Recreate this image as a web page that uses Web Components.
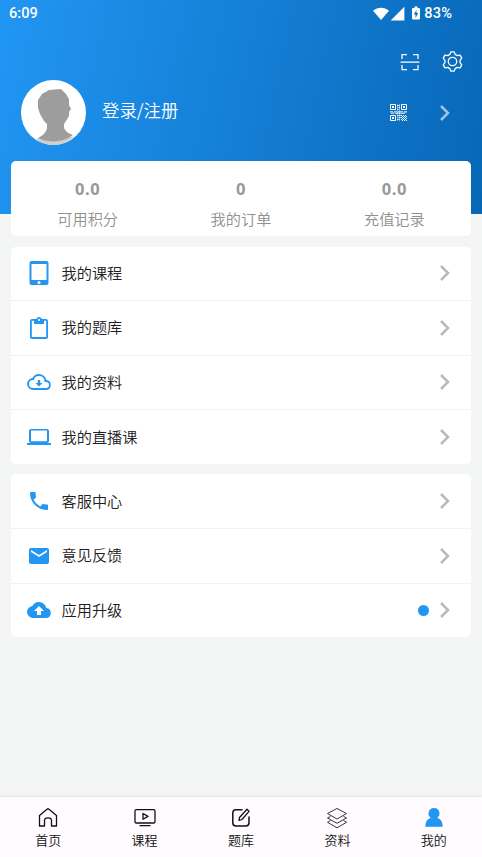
<!DOCTYPE html>
<html lang="zh-CN"><head><meta charset="utf-8"><title>我的</title>
<style>html,body{margin:0;height:100%}body{background:#f4f6f5;font-family:"Noto Sans CJK SC",sans-serif;overflow:hidden}</style></head>
<body><profile-page></profile-page>
<script>
const icons={
 wifi:['0 0 24 24','<path fill="currentColor" d="M0 7C7 1 17 1 24 7L12 21Z"/>'],
 signal:['0 0 24 24','<path fill="currentColor" d="M1 23H23V1Z"/>'],
 battery:['0 0 16 26','<path fill="currentColor" fill-rule="evenodd" d="M5 0H11V3H14Q16 3 16 5V24Q16 26 14 26H2Q0 26 0 24V5Q0 3 2 3H5ZM9 7L3.5 16H7V23L12.5 13H9Z"/>'],
 scan:['0 0 20 18','<path fill="none" stroke="currentColor" stroke-width="1.25" d="M2 6V1.5H7M13 1.5H18V6M2 12V16.5H7M13 16.5H18V12M.5 9H19.5"/>'],
 gear:['0 0 20 20','<g fill="none" stroke="currentColor" stroke-width="1.25" stroke-linejoin="round"><path d="M8.5.8H11.5L12.5 3.2L14.5 4.4L17.2 4L18.8 6.8L17.2 8.9V11.1L18.8 13.2L17.2 16L14.5 15.6L12.5 16.8L11.5 19.2H8.5L7.5 16.8L5.5 15.6L2.8 16L1.2 13.2L2.8 11.1V8.9L1.2 6.8L2.8 4L5.5 4.4L7.5 3.2Z"/><circle cx="10" cy="10" r="4"/></g>'],
 qr:['0 0 17 17','<g fill="none" stroke="currentColor"><path d="M.5.5H5.5V5.5H.5ZM11.5.5H16.5V5.5H11.5ZM.5 11.5H5.5V16.5H.5Z"/><path opacity=".65" d="M7 1.5H10M8 3.5H10M7 5.5H9M0 7.5H3M4 7.5H7M8 7.5H13M14 7.5H17M1 9.5H4M5 9.5H15M7 11.5H12M8 13.5H11M7 15.5H10"/><path opacity=".45" d="M7.5 0V17M9.5 0V17M0 8.5H17"/><path stroke-dasharray="1 1" d="M11 11.5H17M12 12.5H17M11 13.5H17M12 14.5H17M11 15.5H17M12 16.5H17"/></g><path fill="currentColor" d="M2 2H4V4H2ZM13 2H15V4H13ZM2 13H4V15H2Z"/>'],
 chevron:['0 0 10 16','<path fill="none" stroke="currentColor" stroke-width="2.5" d="M1 1L8 8L1 15"/>'],
 avatar:['0 0 65 65','<circle cx="32.5" cy="32.5" r="32.5" fill="#fff"/><path fill="#cfcfcf" d="M15 59Q32 53 53 57Q44 65 32.5 65Q22 65 15 59Z"/><path fill="#9d9d9d" d="M28 10L40 9L43 12L45 14L48 19V25L50 29L48 32V36L45 41L43 44V48Q45 53 52 55Q43 61.5 32 61.5Q23 61 17 58Q25 54 26 48V44L23 41L19 34L17 28V20L21 14Z"/>'],
 tablet:['0 0 24 24','<path fill="currentColor" fill-rule="evenodd" d="M4.500 0H19.500Q21.500 0 21.500 2.200V21.800Q21.500 24 19.500 24H4.500Q2.500 24 2.500 21.800V2.200Q2.500 0 4.500 0ZM4.500 3V19H19.500V3ZM12 20A1.500 1.500 0 1 0 12 23A1.500 1.500 0 1 0 12 20Z"/>'],
 clipboard:['0 0 24 24','<path fill="currentColor" fill-rule="evenodd" d="M19 3h-4.200C14.400 1.800 13.300 1 12 1S9.600 1.800 9.200 3H5c-1.100 0-2 .9-2 2v16c0 1.100.9 2 2 2h14c1.100 0 2-.9 2-2V5c0-1.100-.9-2-2-2zm-7-.2a1 1 0 0 1 0 2.200a1 1 0 0 1 0-2.200zM19.200 21H4.800V4.800H7V8h10V4.800h2.200z"/>'],
 down:['0 0 24 24','<path fill="currentColor" d="M19.350 10.040A7.490 7.490 0 0 0 12 4C9.110 4 6.600 5.640 5.350 8.040A6 6 0 0 0 6 20h13a5 5 0 0 0 .350-9.960zM19 18H6a4 4 0 0 1 0-8h.710A5.500 5.500 0 0 1 17.500 11.500v.500H19a3 3 0 0 1 0 6zM13.200 10h-2.400v3H8.500l3.500 3.500 3.500-3.500h-2.300z"/>'],
 laptop:['0 0 24 24','<path fill="currentColor" d="M20 18c1.100 0 1.990-.9 1.990-2L22 6c0-1.100-.9-2-2-2H4c-1.100 0-2 .9-2 2v10c0 1.100.9 2 2 2H0v2h24v-2zM4 5.500h16v10.800H4z"/>'],
 phone:['0 0 24 24','<path fill="currentColor" d="M6.620 10.790c1.440 2.830 3.760 5.140 6.590 6.590l2.200-2.200c.270-.270.670-.360 1.020-.240 1.120.370 2.330.570 3.570.570.550 0 1 .450 1 1V20c0 .550-.450 1-1 1-9.390 0-17-7.610-17-17 0-.550.450-1 1-1h3.500c.550 0 1 .450 1 1 0 1.250.200 2.450.570 3.570.110.350.030.740-.250 1.020z"/>'],
 mail:['0 0 24 24','<path fill="currentColor" d="M20 4H4c-1.100 0-1.990.9-1.990 2L2 18c0 1.100.9 2 2 2h16c1.100 0 2-.9 2-2V6c0-1.100-.9-2-2-2zm0 4l-8 5-8-5V6l8 5 8-5z"/>'],
 up:['0 0 24 24','<path fill="currentColor" d="M19.350 10.040A7.490 7.490 0 0 0 12 4C9.110 4 6.600 5.640 5.350 8.040A6 6 0 0 0 6 20h13a5 5 0 0 0 .350-9.960zM14 13v4h-4v-4H7l5-5 5 5z"/>'],
 home:['0 0 22 22','<path fill="none" stroke="currentColor" stroke-width="1.3" stroke-linejoin="round" d="M2.500 8.500L10 2.200Q11 1.300 12 2.200L19.500 8.500V19H14.500V13.500Q14.500 10.800 11 10.800T7.500 13.500V19H2.500Z"/>'],
 video:['0 0 22 22','<g fill="none" stroke="currentColor" stroke-width="1.3"><rect x="1" y="2.700" width="20" height="13.300" rx="1.300"/><path stroke-linejoin="round" d="M9 6.500L14 9.400L9 12.300ZM5.500 18.600H16.500"/></g>'],
 edit:['0 0 22 22','<g fill="none" stroke="currentColor" stroke-width="1.500" stroke-linejoin="round"><path d="M12.500 2.800H6Q2.800 2.800 2.800 6V15.800Q2.800 19 6 19H15.800Q19 19 19 15.800V9.500"/><path stroke-width="1.300" d="M17 2.300L19 4.300L12 12.500L9 13.500L9.500 10.500Z"/></g>'],
 layers:['0 0 22 22','<g fill="none" stroke="currentColor" stroke-width=".85" stroke-linejoin="round"><path d="M11 1.500L20.500 6.500L11 12L1.500 6.500ZM4.500 9.300L1.500 11L11 16.300L20.500 11L17.500 9.300M4.500 13.500L1.500 15.300L11 20.800L20.500 15.300L17.500 13.500"/></g>'],
 user:['0 0 22 22','<path fill="currentColor" d="M11 1A5.400 5.400 0 0 1 14.200 10.800Q19.300 12.600 19.600 18V19.700H2.400V18Q2.700 12.600 7.800 10.800A5.400 5.400 0 0 1 11 1Z"/>']
};
function define(name,render){customElements.define(name,class extends HTMLElement{connectedCallback(){if(!this.shadowRoot)this.attachShadow({mode:'open'}).innerHTML=render(this)}})}
define('app-icon',e=>{const i=icons[e.getAttribute('name')];return `<style>:host{display:block;flex:none}svg{display:block;width:100%;height:100%}</style><svg viewBox="${i[0]}">${i[1]}</svg>`});
define('status-bar',()=>`<style>:host{height:27px;display:flex;align-items:center;font:500 14.6px/27px Roboto,sans-serif;padding:0 30px 0 9px;box-sizing:border-box}.time{margin-right:auto}
.w{width:16px;height:16px}.s{width:15px;height:15px;margin-left:1px}.b{width:8px;height:14px;margin:-2px 4px 0 7px}.p{letter-spacing:.1px}</style><span class="time">6:09</span><app-icon class="w" name="wifi"></app-icon><app-icon class="s" name="signal"></app-icon><app-icon class="b" name="battery"></app-icon><span class="p">83%</span>`);
define('profile-header',()=>`<style>:host{display:block;height:214px;color:#fff;background:linear-gradient(102deg,#2196f3,#0767b7)}
.tools{height:53px;display:flex;align-items:center;justify-content:flex-end;gap:22px;padding:16px 19px 0 0;box-sizing:border-box}.scan{width:20px;height:18px}.gear{width:21px;height:21px}
.user{height:65px;display:flex;align-items:center;padding:0 32px 0 21px}.av{width:65px;height:65px}.name{font-size:17.400px;line-height:24px;margin:-6px auto 0 16px;font-weight:350}.qr{width:17px;height:17px}.ch{width:10px;height:16px;margin-left:33px;opacity:.6}</style>
<status-bar></status-bar><div class="tools"><app-icon class="scan" name="scan"></app-icon><app-icon class="gear" name="gear"></app-icon></div><div class="user"><app-icon class="av" name="avatar"></app-icon><span class="name">登录/注册</span><app-icon class="qr" name="qr"></app-icon><app-icon class="ch" name="chevron"></app-icon></div>`);
define('stat-item',e=>`<style>:host{flex:1;display:flex;flex-direction:column;align-items:center;color:#999}b{font:700 16.500px/22px "Noto Sans",sans-serif;letter-spacing:.6px}span{font-size:15.200px;line-height:22px;margin-top:7px;font-weight:350;color:#909090}</style><b>${e.getAttribute('value')}</b><span><slot></slot></span>`);
define('stats-card',()=>`<style>:host{display:flex;height:75px;background:#fff;border-radius:5px;padding-top:17px;box-sizing:border-box}</style><slot></slot>`);
define('menu-card',()=>`<style>:host{display:block;background:#fff;border-radius:5px;overflow:hidden}</style><slot></slot>`);
define('menu-row',e=>`<style>:host{display:flex;align-items:center;height:54.600px;box-sizing:border-box;padding:0 21px 0 15.500px;border-bottom:1px solid #f1f3f2}:host(:last-child){height:53.600px;border:0}.i{width:24px;height:24px;color:#2196f3}.t{font-size:15.200px;line-height:24px;margin:-3px auto 0 11px;color:#202020;font-weight:350}.c{width:10px;height:16px;color:#bababa}.d{width:11px;height:11px;border-radius:50%;background:#2196f3;margin-right:11px}</style><app-icon class="i" name="${e.getAttribute('icon')}"></app-icon><span class="t"><slot></slot></span>${e.hasAttribute('dot')?'<i class="d"></i>':''}<app-icon class="c" name="chevron"></app-icon>`);
define('nav-item',e=>`<style>:host{flex:1;display:flex;flex-direction:column;align-items:center;padding-top:10px;color:#111}.i{width:22px;height:22px}:host([active]) .i{color:#2196f3}span{font-size:13px;line-height:18px;margin-top:2px;font-weight:350}</style><app-icon class="i" name="${e.getAttribute('icon')}"></app-icon><span><slot></slot></span>`);
define('bottom-nav',()=>`<style>:host{display:flex;height:60px;background:#fffbff;box-shadow:0 -1px 2px #00000014}</style><slot></slot>`);
define('profile-page',()=>`<style>:host{height:857px;display:flex;flex-direction:column}main{flex:1;display:flex;flex-direction:column;gap:10.500px;margin:-53px 11px 0}</style>
<profile-header></profile-header><main><stats-card><stat-item value="0.0">可用积分</stat-item><stat-item value="0">我的订单</stat-item><stat-item value="0.0">充值记录</stat-item></stats-card>
<menu-card><menu-row icon="tablet">我的课程</menu-row><menu-row icon="clipboard">我的题库</menu-row><menu-row icon="down">我的资料</menu-row><menu-row icon="laptop">我的直播课</menu-row></menu-card>
<menu-card><menu-row icon="phone">客服中心</menu-row><menu-row icon="mail">意见反馈</menu-row><menu-row icon="up" dot>应用升级</menu-row></menu-card></main>
<bottom-nav><nav-item icon="home">首页</nav-item><nav-item icon="video">课程</nav-item><nav-item icon="edit">题库</nav-item><nav-item icon="layers">资料</nav-item><nav-item icon="user" active>我的</nav-item></bottom-nav>`);
</script></body></html>
